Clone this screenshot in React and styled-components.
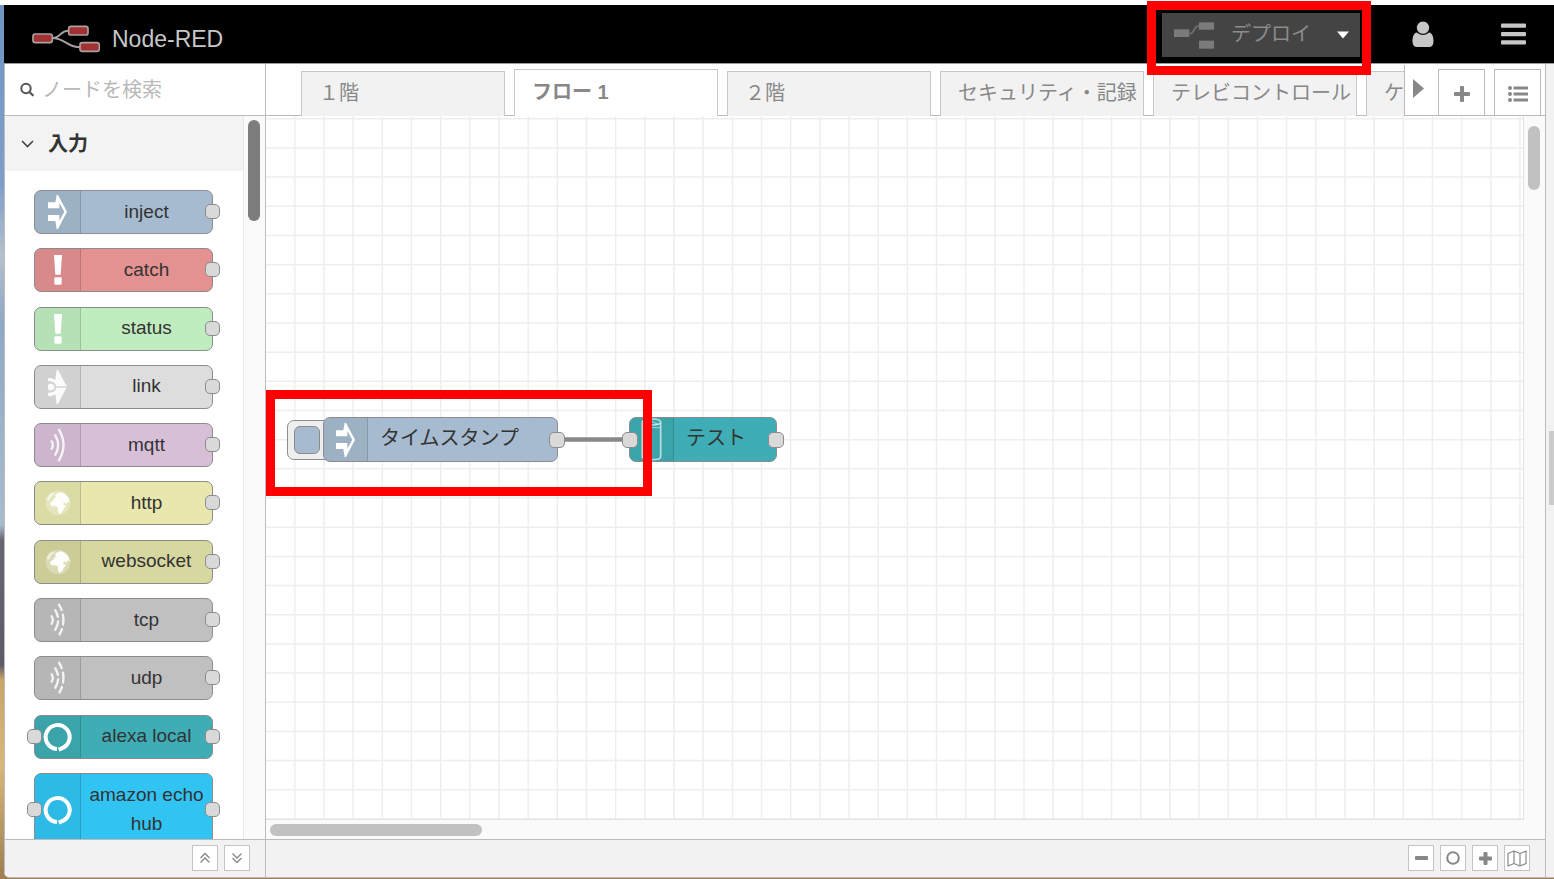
import React from "react";
import styled, { createGlobalStyle, css } from "styled-components";

const line = "#bbbbbb";

const GlobalStyle = createGlobalStyle`
  *, *::before, *::after { box-sizing: border-box; }
  body {
    margin: 0;
    background: #ffffff;
    color: #333333;
    font-family: "Liberation Sans", "Noto Sans CJK JP", sans-serif;
    font-size: 20px;
    line-height: 28px;
  }
  button, input { font: inherit; color: inherit; }
  button { cursor: pointer; padding: 0; border: 0; background: none; }
  svg { display: block; flex: none; }
`;

const Desktop = styled.div`
  height: 100vh;
  min-height: 480px;
  border-top: 5px solid #ffffff;
  padding: 0 0 1px 4px;
  background: linear-gradient(
    180deg, #6f94c6 0, #7f9fca 180px, #b4bfcc 250px, #8ea9c6 320px, #a9bccd 520px,
    #6a6572 535px, #5f5a68 660px, #c9a568 675px, #d8b878 760px, #a08052 870px
  );
`;

const AppWindow = styled.div`
  height: 100%;
  display: flex;
  flex-direction: column;
`;

const Header = styled.header`
  flex: none;
  height: 59px;
  display: flex;
  align-items: center;
  padding: 0 27px 0 28px;
  background: #000000;
  border-bottom: 1px solid #999999;
`;

const Brand = styled.h1`
  display: flex;
  align-items: center;
  gap: 12px;
  margin: 0;
  padding-top: 10px;
  color: #c7c7c7;
  font-size: 23px;
  font-weight: 400;
`;

const HeaderTools = styled.div`
  display: flex;
  align-items: center;
  margin-left: auto;
`;

const DeployWrap = styled.div`
  position: relative;
  margin: 2px 52px 0 0;
`;

const DeployButton = styled.button`
  display: flex;
  align-items: center;
  width: 198px;
  height: 44px;
  padding: 0 11px 0 12px;
  background: #444444;
  color: #8c8c8c;
`;

const DeployLabel = styled.span`
  margin: 0 auto 2px 17px;
`;

const Highlight = styled.div`
  position: absolute;
  z-index: 5;
  border: 9px solid #ff0000;
  pointer-events: none;
  ${(p) =>
    p.$target === "deploy"
      ? css`inset: -12px -11px -18px -15px;`
      : css`left: 0; top: 274px; width: 386px; height: 106px;`}
`;

const IconButton = styled.button`
  display: flex;
  & + & { margin-left: 67px; }
`;

const Main = styled.div`
  flex: 1;
  min-height: 0;
  display: grid;
  grid-template-columns: 262px minmax(0, 1fr) 8px;
  border-bottom: 1px solid ${line};
  border-bottom-left-radius: 6px;
  background: #ffffff;
  overflow: hidden;
`;

const Palette = styled.aside`
  min-height: 0;
  display: flex;
  flex-direction: column;
  border-left: 1px solid ${line};
  border-right: 1px solid ${line};
`;

const SearchBox = styled.label`
  flex: none;
  display: flex;
  align-items: center;
  gap: 7px;
  height: 52px;
  padding: 0 12px 0 15px;
  border-bottom: 1px solid ${line};
`;

const SearchInput = styled.input`
  flex: 1;
  min-width: 0;
  padding: 0;
  border: 0;
  outline: 0;
  background: none;
  &::placeholder { color: #b8b8b8; opacity: 1; }
`;

const PaletteBody = styled.div`
  flex: 1;
  min-height: 0;
  display: grid;
  grid-template-columns: minmax(0, 1fr) 22px;
`;

const PaletteScroll = styled.div`
  min-height: 0;
  overflow: hidden;
`;

const CategoryButton = styled.button`
  display: flex;
  align-items: center;
  gap: 14px;
  width: 100%;
  height: 55px;
  padding-left: 16px;
  background: #f3f3f3;
  font-weight: 700;
`;

const NodeList = styled.ul`
  display: flex;
  flex-direction: column;
  justify-content: space-between;
  height: 676px;
  margin: 0;
  padding: 19px 0 0 29px;
  list-style: none;
`;

const NodeBox = styled.div`
  position: relative;
  display: flex;
  border: 1px solid #8c8c8c;
  border-radius: 7px;
  background: ${(p) => p.$color};
  ${(p) =>
    p.$canvas
      ? css`height: 45px; width: ${p.$width}px; font-size: 20px;`
      : css`min-height: 44px; width: 179px; font-size: 19px;`}
`;

const NodeIcon = styled.div`
  flex: none;
  display: flex;
  align-items: center;
  justify-content: center;
  width: ${(p) => (p.$canvas ? 44 : 46)}px;
  border-right: 1px solid rgba(0, 0, 0, 0.14);
  border-radius: 6px 0 0 6px;
  background: rgba(0, 0, 0, 0.05);
`;

const NodeLabel = styled.span`
  flex: 1;
  align-self: center;
  line-height: 29px;
  ${(p) => (p.$canvas ? css`padding: 0 0 3px 12px;` : css`padding: 0 2px 2px; text-align: center;`)}
`;

const Port = styled.span`
  position: absolute;
  top: calc(50% - 8px);
  ${(p) => (p.$side === "in" ? "left: -8px;" : "right: -8px;")}
  width: ${(p) => (p.$canvas ? 16 : 15)}px;
  height: ${(p) => (p.$canvas ? 16 : 15)}px;
  border: 1px solid #8c8c8c;
  border-radius: 5px;
  background: #d9d9d9;
`;

const ScrollTrack = styled.div`
  background: #fafafa;
  ${(p) =>
    p.$kind === "palette" &&
    css`padding: 4px 4px 0; border-left: 1px solid #e8e8e8;`}
  ${(p) => p.$kind === "vertical" && css`padding: 10px 5px 0 4px;`}
  ${(p) => p.$kind === "horizontal" && css`grid-column: 1 / -1; padding: 4px 4px 0;`}
`;

const ScrollThumb = styled.div`
  border-radius: 6px;
  background: ${(p) => (p.$dark ? "#7d7d7d" : "#c1c1c1")};
  ${(p) =>
    p.$horizontal
      ? css`width: ${p.$length}px; height: 12px;`
      : css`width: 12px; height: ${p.$length}px;`}
`;

const Footer = styled.footer`
  flex: none;
  display: flex;
  justify-content: flex-end;
  gap: 6px;
  height: 38px;
  padding: 5px 15px 0;
  border-top: 1px solid ${line};
  background: #f2f2f2;
`;

const FooterButton = styled.button`
  display: flex;
  align-items: center;
  justify-content: center;
  width: 26px;
  height: 26px;
  border: 1px solid #c4c4c4;
  background: #ffffff;
`;

const Workspace = styled.main`
  min-height: 0;
  display: flex;
  flex-direction: column;
  border-right: 1px solid ${line};
`;

const TabBar = styled.div`
  flex: none;
  display: flex;
  align-items: flex-end;
  height: 52px;
  box-shadow: inset 0 -1px ${line};
`;

const TabList = styled.div`
  flex: 1;
  min-width: 0;
  display: flex;
  align-items: flex-end;
  gap: 9px;
  padding-left: 35px;
  overflow: hidden;
`;

const Tab = styled.button`
  flex: none;
  width: 204px;
  height: ${(p) => (p.$active ? 47 : 45)}px;
  padding: 0 0 2px 17px;
  border: 1px solid #c8c8c8;
  border-bottom: 0;
  background: ${(p) => (p.$active ? "#ffffff" : "#f2f2f2")};
  color: #888888;
  font-weight: ${(p) => (p.$active ? 700 : 400)};
  text-align: left;
  white-space: nowrap;
  overflow: hidden;
`;

const TabScroll = styled.button`
  display: flex;
  justify-content: center;
  width: 34px;
  height: 51px;
  padding: 14px 6px 0 0;
  border-left: 1px solid ${line};
`;

const TabTool = styled.button`
  display: flex;
  align-items: center;
  justify-content: center;
  width: 47px;
  height: 47px;
  padding-top: 2px;
  border: 1px solid ${line};
  & + & { margin: 0 4px 0 9px; }
`;

const CanvasArea = styled.div`
  flex: 1;
  min-height: 0;
  display: grid;
  grid-template-columns: minmax(0, 1fr) 21px;
  grid-template-rows: minmax(0, 1fr) 19px;
`;

const Canvas = styled.div`
  position: relative;
  border-right: 1px solid #e2e2e2;
  border-bottom: 1px solid #e2e2e2;
  overflow: hidden;
`;

const Drawing = styled.svg`
  position: absolute;
  inset: 0;
  width: 100%;
  height: 100%;
`;

const Placed = styled.div`
  position: absolute;
  left: ${(p) => p.$x}px;
  top: ${(p) => p.$y}px;
`;

const InjectButton = styled.button`
  display: flex;
  align-items: center;
  width: 44px;
  height: 40px;
  padding-left: 6px;
  border: 1px solid #8c8c8c;
  border-radius: 7px;
  background: #eeeeee;
`;

const InjectPad = styled.span`
  width: 26px;
  height: 28px;
  border: 1px solid #8c8c8c;
  border-radius: 6px;
  background: #a6bbcf;
`;

const Sidebar = styled.div`
  display: flex;
  align-items: center;
  justify-content: flex-end;
  background: #f2f2f2;
`;

const SidebarHandle = styled.button`
  width: 5px;
  height: 74px;
  margin-bottom: 6px;
  background: #cccccc;
`;

const Logo = () => (
  <svg width="68" height="28" viewBox="0 0 204 84" fill="none" aria-hidden="true">
    <g stroke="#a8a2a2" strokeWidth="5">
      <path d="M60 39C88 39 82 17 110 17M60 39C100 39 104 67 146 67" strokeWidth="6" />
      <rect x="3" y="27" width="58" height="26" rx="7" fill="#a33033" />
      <rect x="110" y="4" width="58" height="26" rx="7" fill="#a33033" />
      <rect x="144" y="53" width="58" height="26" rx="7" fill="#a33033" />
    </g>
  </svg>
);

const DeployIcon = () => (
  <svg width="40" height="27" viewBox="0 0 120 81" aria-hidden="true">
    <g fill="#7b7b7b">
      <rect y="22" width="46" height="23" />
      <rect x="75" y="1" width="45" height="22" />
      <rect x="75" y="56" width="45" height="24" />
    </g>
    <path d="M46 35C64 35 57 12 75 12" stroke="#6a6a6a" strokeWidth="6" fill="none" />
  </svg>
);

const Caret = () => (
  <svg width="12" height="8" viewBox="0 0 12 8" aria-hidden="true">
    <path d="M0 0.500H12L6 7.500Z" fill="#ffffff" />
  </svg>
);

const UserIcon = () => (
  <svg width="22" height="27" viewBox="0 0 22 27" fill="#c7c7c7" aria-hidden="true">
    <path d="M5 11.500C1.500 12 0.500 16 0.500 20.500C0.500 24 2 26 5 26H17C20 26 21.500 24 21.500 20.500C21.500 16 20.500 12 17 11.500C14 14.500 8 14.500 5 11.500Z" />
    <circle cx="11" cy="6.700" r="6.600" stroke="#000000" strokeWidth="0.900" />
  </svg>
);

const MenuIcon = () => (
  <svg width="26" height="22" viewBox="0 0 26 22" fill="#c7c7c7" aria-hidden="true">
    <rect y="0.500" width="25" height="4.300" rx="1" />
    <rect y="8.900" width="25" height="4.300" rx="1" />
    <rect y="17.200" width="25" height="4.300" rx="1" />
  </svg>
);

const SearchIcon = () => (
  <svg width="15" height="15" viewBox="0 0 15 15" fill="none" stroke="#555555" aria-hidden="true">
    <circle cx="6" cy="6.500" r="4.700" strokeWidth="2" />
    <path d="M9.500 10L12.800 13.300" strokeWidth="2.200" strokeLinecap="round" />
  </svg>
);

const Chevron = () => (
  <svg width="13" height="9" viewBox="0 0 13 9" fill="none" stroke="#444444" strokeWidth="1.600" aria-hidden="true">
    <path d="M1 2L6.500 7.500L12 2" />
  </svg>
);

const DoubleChevron = ({ up }) => (
  <svg width="12" height="12" viewBox="0 0 12 12" fill="none" stroke="#888888" strokeWidth="1.300" aria-hidden="true">
    <path d={up ? "M1.500 6L6 1.500L10.500 6M1.500 10.500L6 6L10.500 10.500" : "M1.500 1.500L6 6L10.500 1.500M1.500 6L6 10.500L10.500 6"} />
  </svg>
);

const Triangle = () => (
  <svg width="11" height="19" viewBox="0 0 11 19" aria-hidden="true">
    <path d="M0 0L11 9.500L0 19Z" fill="#888888" />
  </svg>
);

const Plus = ({ size, bar }) => (
  <svg width={size} height={size} viewBox={`0 0 ${size} ${size}`} fill="#888888" aria-hidden="true">
    <rect x="0" y={(size - bar) / 2} width={size} height={bar} rx="1" />
    <rect y="0" x={(size - bar) / 2} height={size} width={bar} rx="1" />
  </svg>
);

const ListIcon = () => (
  <svg width="20" height="16" viewBox="0 0 20 16" fill="#888888" aria-hidden="true">
    {[2, 8, 14].map((y) => (
      <g key={y}>
        <circle cx="2" cy={y} r="2" />
        <rect x="5.500" y={y - 1.400} width="14.500" height="2.800" rx="0.500" />
      </g>
    ))}
  </svg>
);

const Minus = () => (
  <svg width="13" height="4" viewBox="0 0 13 4" aria-hidden="true">
    <rect width="13" height="4" rx="1" fill="#888888" />
  </svg>
);

const Ring = () => (
  <svg width="14" height="14" viewBox="0 0 14 14" aria-hidden="true">
    <circle cx="7" cy="7" r="5.800" fill="none" stroke="#888888" strokeWidth="2" />
  </svg>
);

const MapIcon = () => (
  <svg width="20" height="17" viewBox="0 0 20 17" fill="none" stroke="#888888" strokeWidth="1.200" strokeLinejoin="round" aria-hidden="true">
    <path d="M1 3.500L7 1L13 3.500L19 1V13.500L13 16L7 13.500L1 16ZM7 1V13.500M13 3.500V16" />
  </svg>
);

const ArrowIcon = () => (
  <svg width="21" height="36" viewBox="0 0 63 108" aria-hidden="true">
    <path fill="#ffffff" d="M3 25H25L29 2L33 3L60 53L33 105L29 106L25 81H3V63H37V80L52 53L37 27V43H3Z" />
  </svg>
);

const LinkIcon = () => (
  <svg width="21" height="36" viewBox="0 0 63 108" aria-hidden="true">
    <path fill="#ffffff" opacity="0.900" d="M3 28L12 27L25 32L29 2L33 3L60 53L33 105L29 106L25 76L12 82L3 80Z" />
    <g fill="none" stroke="#d3d3d3" strokeWidth="5">
      <path d="M0 39C12 37 18 42 24 48M0 69C12 71 18 66 24 60M27 54H60" />
      <circle cx="12" cy="54" r="13" />
    </g>
  </svg>
);

const WavesIcon = ({ broken }) => (
  <svg width="16" height="34" viewBox="0 0 48 102" fill="none" stroke="#ffffff" strokeLinecap="round" opacity="0.850" aria-hidden="true">
    <path strokeWidth="7" d="M5 40Q12 51 5 62" />
    <path strokeWidth="7" strokeDasharray={broken ? "21 14 40" : "none"} d="M16 22Q33 51 16 80" />
    <path strokeWidth="7" strokeDasharray={broken ? "18 14 30 14" : "none"} d="M27 5Q54 51 27 97" />
  </svg>
);

const BangIcon = () => (
  <svg width="10" height="30" viewBox="0 0 30 90" fill="#ffffff" aria-hidden="true">
    <path d="M3 0H27L23 59H7Z" />
    <rect x="4" y="67" width="22" height="22" rx="4" />
  </svg>
);

const GlobeIcon = () => (
  <svg width="26" height="26" viewBox="0 0 78 78" fill="#ffffff" aria-hidden="true">
    <circle cx="39" cy="39" r="37" opacity="0.280" />
    <path opacity="0.950" d="M30 15L40 8L50 7L60 12L70 23L75 38L68 34L64 42L58 37L54 42L59 46L64 48L56 57L50 68L43 72L39 63L38 51L29 49L19 49L15 41L21 33L28 31L26 25L33 23Z" />
    <path opacity="0.600" d="M4 29L14 12L25 6L27 11L17 21L11 32Z" />
  </svg>
);

const EchoIcon = () => (
  <svg width="30" height="30" viewBox="0 0 90 90" fill="none" stroke="#ffffff" strokeWidth="12" aria-hidden="true">
    <path d="M42 81A36 36 0 1 1 56 79L47 83" />
  </svg>
);

const TankIcon = () => (
  <svg width="21" height="43" viewBox="0 0 63 129" fill="none" stroke="#ffffff" strokeOpacity="0.650" strokeWidth="5" aria-hidden="true">
    <path d="M4 12C4 0 59 0 59 12V116C59 128 4 128 4 116ZM4 12C4 24 59 24 59 12" />
    <path d="M32 10L52 20M34 29H56" strokeWidth="4" strokeOpacity="0.450" />
  </svg>
);

const icons = {
  arrow: <ArrowIcon />,
  bang: <BangIcon />,
  link: <LinkIcon />,
  waves: <WavesIcon />,
  brokenWaves: <WavesIcon broken />,
  globe: <GlobeIcon />,
  echo: <EchoIcon />,
  tank: <TankIcon />,
};

const paletteNodes = [
  { label: "inject", color: "#a6bbcf", icon: "arrow" },
  { label: "catch", color: "#e49191", icon: "bang" },
  { label: "status", color: "#c0edc0", icon: "bang" },
  { label: "link", color: "#dddddd", icon: "link" },
  { label: "mqtt", color: "#d8bfd8", icon: "waves" },
  { label: "http", color: "#e7e7ae", icon: "globe" },
  { label: "websocket", color: "#d7d7a0", icon: "globe" },
  { label: "tcp", color: "#c0c0c0", icon: "brokenWaves" },
  { label: "udp", color: "#c0c0c0", icon: "brokenWaves" },
  { label: "alexa local", color: "#3fadb5", icon: "echo", input: true },
  { label: "amazon echo hub", color: "#31c4f3", icon: "echo", input: true, tall: true },
];

const tabs = ["１階", "フロー 1", "２階", "セキュリティ・記録", "テレビコントロール", "ケ"];

const TallBox = styled(NodeBox)`
  min-height: 74px;
`;

function FlowNode({ label, color, icon, input, canvas, width, tall }) {
  const Box = tall ? TallBox : NodeBox;
  return (
    <Box $color={color} $canvas={canvas} $width={width}>
      <NodeIcon $canvas={canvas}>{icons[icon]}</NodeIcon>
      <NodeLabel $canvas={canvas}>{label}</NodeLabel>
      {input && <Port $side="in" $canvas={canvas} />}
      <Port $side="out" $canvas={canvas} />
    </Box>
  );
}

const GRID = 29.17;
const gridPath = [
  ...Array.from({ length: 100 }, (_, i) => `M${(28.8 + i * GRID).toFixed(1)} 0V2400`),
  ...Array.from({ length: 80 }, (_, i) => `M0 ${(2.8 + i * GRID).toFixed(1)}H3000`),
].join("");

export default function App() {
  return (
    <>
      <GlobalStyle />
      <Desktop>
        <AppWindow>
          <Header>
            <Brand>
              <Logo />
              Node-RED
            </Brand>
            <HeaderTools>
              <DeployWrap>
                <DeployButton type="button">
                  <DeployIcon />
                  <DeployLabel>デプロイ</DeployLabel>
                  <Caret />
                </DeployButton>
                <Highlight $target="deploy" />
              </DeployWrap>
              <IconButton type="button" aria-label="ユーザー"><UserIcon /></IconButton>
              <IconButton type="button" aria-label="メニュー"><MenuIcon /></IconButton>
            </HeaderTools>
          </Header>
          <Main>
            <Palette>
              <SearchBox>
                <SearchIcon />
                <SearchInput type="text" placeholder="ノードを検索" aria-label="ノードを検索" />
              </SearchBox>
              <PaletteBody>
                <PaletteScroll>
                  <CategoryButton type="button">
                    <Chevron />
                    入力
                  </CategoryButton>
                  <NodeList>
                    {paletteNodes.map((n) => (
                      <li key={n.label}><FlowNode {...n} /></li>
                    ))}
                  </NodeList>
                </PaletteScroll>
                <ScrollTrack $kind="palette"><ScrollThumb $dark $length={101} /></ScrollTrack>
              </PaletteBody>
              <Footer>
                <FooterButton type="button" aria-label="すべて閉じる"><DoubleChevron up /></FooterButton>
                <FooterButton type="button" aria-label="すべて開く"><DoubleChevron /></FooterButton>
              </Footer>
            </Palette>
            <Workspace>
              <TabBar>
                <TabList role="tablist">
                  {tabs.map((t, i) => (
                    <Tab key={t} type="button" role="tab" aria-selected={i === 1} $active={i === 1}>{t}</Tab>
                  ))}
                </TabList>
                <TabScroll type="button" aria-label="次のタブ"><Triangle /></TabScroll>
                <TabTool type="button" aria-label="フローを追加"><Plus size={16} bar={4} /></TabTool>
                <TabTool type="button" aria-label="フロー一覧"><ListIcon /></TabTool>
              </TabBar>
              <CanvasArea>
                <Canvas>
                  <Drawing aria-hidden="true">
                    <path d={gridPath} stroke="#eeeeee" strokeWidth="1.460" fill="none" />
                    <path d="M292 323.500H364" stroke="#888888" strokeWidth="4.400" />
                  </Drawing>
                  <Placed $x={21} $y={304}>
                    <InjectButton type="button" aria-label="実行"><InjectPad /></InjectButton>
                  </Placed>
                  <Placed $x={57} $y={301}>
                    <FlowNode canvas width={235} label="タイムスタンプ" color="#a6bbcf" icon="arrow" />
                  </Placed>
                  <Placed $x={363} $y={301}>
                    <FlowNode canvas width={148} label="テスト" color="#3fadb5" icon="tank" input />
                  </Placed>
                  <Highlight $target="flow" />
                </Canvas>
                <ScrollTrack $kind="vertical"><ScrollThumb $length={64} /></ScrollTrack>
                <ScrollTrack $kind="horizontal"><ScrollThumb $horizontal $length={212} /></ScrollTrack>
              </CanvasArea>
              <Footer>
                <FooterButton type="button" aria-label="縮小"><Minus /></FooterButton>
                <FooterButton type="button" aria-label="等倍"><Ring /></FooterButton>
                <FooterButton type="button" aria-label="拡大"><Plus size={13} bar={4} /></FooterButton>
                <FooterButton type="button" aria-label="ナビゲーター"><MapIcon /></FooterButton>
              </Footer>
            </Workspace>
            <Sidebar>
              <SidebarHandle type="button" aria-label="サイドバー" />
            </Sidebar>
          </Main>
        </AppWindow>
      </Desktop>
    </>
  );
}
